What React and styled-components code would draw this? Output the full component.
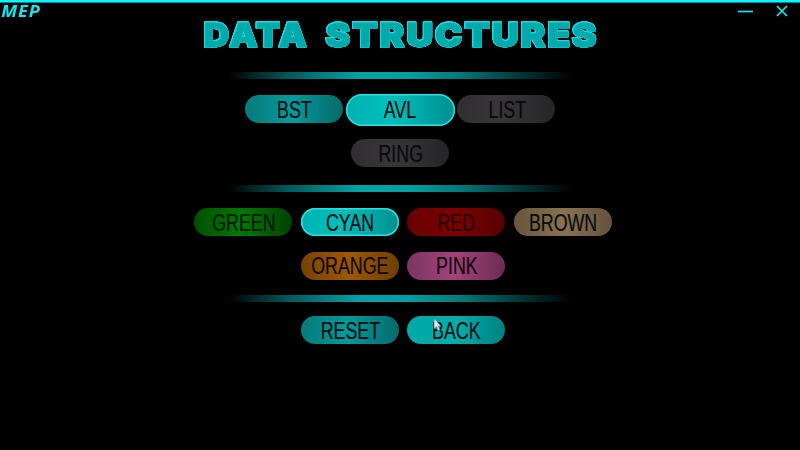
import React from "react";
import styled, { createGlobalStyle } from "styled-components";

const GlobalStyle = createGlobalStyle`
  * { box-sizing: border-box; }
  body { margin: 0; background: #000; overflow: hidden; }
`;

const Window = styled.main`
  position: relative;
  width: 800px;
  height: 450px;
  background: #000;
  font-family: "Liberation Sans", Arial, sans-serif;
  overflow: hidden;
`;

const TitleBar = styled.header`
  display: flex;
  justify-content: space-between;
  height: 20px;
  border-top: 2px solid #00f8ff;
  box-shadow: inset 0 1px #008a91;
`;

const Brand = styled.span`
  padding-left: 1px;
  font: italic 700 15.5px/18px "Open Sans", sans-serif;
  letter-spacing: 0.8px;
  color: #12e6ec;
  transform: scaleX(1.17);
  transform-origin: left;
`;

const WindowControls = styled.div`
  display: flex;
  gap: 23px;
  padding: 3px 12px 0 0;
`;

const ControlIcon = styled.svg`
  width: ${(p) => p.$width}px;
  height: 12px;
  fill: none;
  stroke: #18edf2;
  stroke-width: 1.6;
`;

const Title = styled.h1`
  display: flex;
  justify-content: space-between;
  width: 393px;
  height: 28px;
  margin: 1px 0 0 204px;
  filter: drop-shadow(0.8px 0 #10dfe2) drop-shadow(-0.8px 0 #10dfe2)
    drop-shadow(0 0.8px #10dfe2) drop-shadow(0 -0.8px #10dfe2);
`;

const Word = styled.svg`
  width: ${(p) => p.$width}px;
  height: 28px;
  overflow: visible;
  font: 900 33px "Inter", sans-serif;
  letter-spacing: 1.8px;
  fill: #00a9ab;
  stroke: #00a9ab;
  stroke-width: 0.8;
`;

const Divider = styled.hr`
  width: 344px;
  height: 7px;
  margin: ${(p) => p.$top}px auto 0;
  border: 0;
  background: linear-gradient(90deg, transparent, #005b5d 18%, #00a2a4 38%, #00a0a2 52%, #007779 68%, #003d3e 83%, transparent);
`;

const ButtonRow = styled.div`
  display: flex;
  justify-content: center;
  align-items: center;
  gap: 8.4px;
  height: 28px;
  margin-top: ${(p) => p.$top}px;
  padding-left: ${(p) => p.$shift || 0}px;
`;

const tones = {
  teal: "#087a7c, #009a9b 48%, #08696b",
  active: "#00b2b1, #00bebb 40%, #00a7a6 72%, #008e8e",
  back: "#00a9a8, #00aeac 50%, #009594 76%, #008180",
  gray: "#302e31, #383639 45%, #252426",
  green: "#005000, #007800 48%, #004300",
  red: "#680000, #7e0000 50%, #560000",
  brown: "#67553d, #8b714f 50%, #65523b",
  orange: "#784200, #9c5800 48%, #6e3e00",
  pink: "#793561, #a24279 48%, #6c2b54",
};

const Pill = styled.button`
  flex: none;
  display: flex;
  align-items: center;
  justify-content: center;
  width: ${(p) => (p.$large ? 109 : 98)}px;
  height: ${(p) => (p.$large ? 32 : 28)}px;
  margin: ${(p) => (p.$large ? "1px -5.5px 0" : "0")};
  padding: ${(p) => (p.$large ? "0" : "1px 0 0 1px")};
  border: 0;
  border-radius: 16px;
  background: linear-gradient(90deg, ${(p) => tones[p.$tone]});
  box-shadow: ${(p) => (p.$selected ? "inset 0 0 0 1.5px #25e2e1" : "none")};
  font: 23px/28px "Liberation Sans", Arial, sans-serif;
  color: ${(p) => p.$ink || "#040d0f"};
`;

const Label = styled.span`
  transform: translateY(${(p) => (p.$large ? 0 : 0.4)}px) scaleX(0.775);
  -webkit-text-stroke: 0.2px currentColor;
`;

const Cursor = styled.svg`
  position: absolute;
  left: 433px;
  top: 317px;
  width: 9px;
  height: 15px;
`;

function PillButton({ children, ...props }) {
  return (
    <Pill {...props}>
      <Label $large={props.$large}>{children}</Label>
    </Pill>
  );
}

export default function App() {
  return (
    <Window>
      <GlobalStyle />
      <TitleBar>
        <Brand>MEP</Brand>
        <WindowControls>
          <ControlIcon $width={15} viewBox="0 0 15 12"><path d="M0 6.5H15" /></ControlIcon>
          <ControlIcon $width={12} viewBox="0 0 12 12"><path d="M1 1L11 11M11 1L1 11" /></ControlIcon>
        </WindowControls>
      </TitleBar>
      <Title>
        <Word $width={103}>
          <text x="0" y="25.5" textLength="105" lengthAdjust="spacingAndGlyphs">DATA</text>
        </Word>
        <Word $width={271}>
          <text x="0" y="25.5" textLength="273" lengthAdjust="spacingAndGlyphs">STRUCTURES</text>
        </Word>
      </Title>
      <Divider $top={23} />
      <ButtonRow $top={16}>
        <PillButton $tone="teal">BST</PillButton>
        <PillButton $tone="active" $selected $large>AVL</PillButton>
        <PillButton $tone="gray" $ink="#09090a">LIST</PillButton>
      </ButtonRow>
      <ButtonRow $top={16}>
        <PillButton $tone="gray" $ink="#09090a">RING</PillButton>
      </ButtonRow>
      <Divider $top={17.5} />
      <ButtonRow $top={16.5} $shift={6}>
        <PillButton $tone="green" $ink="#001700">GREEN</PillButton>
        <PillButton $tone="active" $selected>CYAN</PillButton>
        <PillButton $tone="red" $ink="#230000">RED</PillButton>
        <PillButton $tone="brown">BROWN</PillButton>
      </ButtonRow>
      <ButtonRow $top={15.5} $shift={6}>
        <PillButton $tone="orange" $ink="#100800">ORANGE</PillButton>
        <PillButton $tone="pink" $ink="#10070d">PINK</PillButton>
      </ButtonRow>
      <Divider $top={15.5} />
      <ButtonRow $top={14} $shift={6}>
        <PillButton $tone="teal">RESET</PillButton>
        <PillButton $tone="back">BACK</PillButton>
      </ButtonRow>
      <Cursor viewBox="0 0 9 15">
        <path d="M1 1V12L3.4 9.8L5 14L7 13.2L5.3 9.2H8Z" fill="#dcecec" stroke="#526e70" strokeWidth=".7" />
      </Cursor>
    </Window>
  );
}
